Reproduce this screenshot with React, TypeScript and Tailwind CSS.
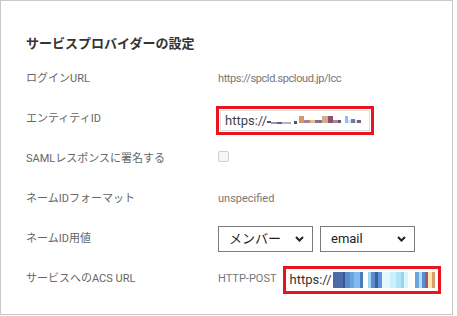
import React from 'react';

const font = "font-['Roboto','Noto_Sans_CJK_JP',sans-serif]";

// pixelated (blurred) parts of the URLs: [width, height, offsetY, colour]
const entityBlur: [number, number, number, string][] = [
  [4, 2, 1, '#4a5470'], [6, 2, 2, '#9a9ab8'], [5, 2, 2, '#5b6282'], [6, 2, 2, '#b3b4d0'],
  [3, 2, 2, '#c8aaa8'], [3, 0, 0, 'transparent'], [3, 3, 2, '#4b5272'], [2, 0, 0, 'transparent'],
  [5, 7, -1, '#cf9b6e'], [6, 3, 1, '#a88098'], [5, 3, 1, '#e6bc92'], [7, 3, 1, '#807192'],
  [6, 7, -1, '#d6ab8a'], [5, 7, -1, '#8c4f6e'], [5, 3, 1, '#b0849e'], [3, 3, 1, '#6a5072'],
  [4, 0, 0, 'transparent'], [3, 7, -1, '#8cc0f2'], [3, 3, 1, '#d6e4f4'], [4, 4, 0, '#6080ae'],
  [2, 3, 1, '#ffd8ae'], [4, 3, 1, '#716282'],
];

const acsBlur: [number, string][] = [
  [10, '#4d6aab'], [2, '#3b548f'], [5, '#5a8ccf'], [4, '#6ba5e0'], [6, '#7fbbec'], [3, '#4a7cc0'],
  [5, '#ffffff'], [3, '#a3d6f2'], [4, '#5a8ccf'], [3, '#3f5c9c'], [4, '#5f95d4'], [8, '#e6f8fd'],
  [6, '#c9f0fc'], [5, '#b2e4f8'], [3, '#9ad4f0'], [4, '#dbf5fc'], [7, '#ffffff'], [4, '#6aa6e0'],
  [3, '#b2e2f8'], [3, '#5b8fd0'], [3, '#9a5a70'], [4, '#fde6b2'], [3, '#d9a06e'],
];

const Chevron = () => (
  <svg width="9" height="6" viewBox="0 0 9 6" className="shrink-0">
    <path d="M1 1l3.5 3.5L8 1" fill="none" stroke="#222" strokeWidth="2" />
  </svg>
);

const Select = ({ label }: { label: string }) => (
  <div className="flex items-center justify-between w-[95px] h-[26px] border border-[#7a7a7a] pl-[10px] pr-[8px] text-[13px] text-[#222] bg-white">
    <span>{label}</span>
    <Chevron />
  </div>
);

const Row = ({ label, children }: { label: string; children: React.ReactNode }) => (
  <div className="flex items-center h-10">
    <div className="w-[192px] shrink-0 text-[11px] text-[#666]">{label}</div>
    <div className="flex items-center">{children}</div>
  </div>
);

export default function App() {
  return (
    <div className={`w-[453px] h-[315px] border border-[#c8c8c8] bg-white pl-[25px] ${font}`}>
      <div className="pt-[34px] text-[13px] leading-[18px] font-bold text-[#333]">
        サービスプロバイダーの設定
      </div>
      <div className="pt-[6px]">
        <Row label="ログインURL">
          <span className="text-[11px] tracking-[-0.4px] text-[#777]">https://spcld.spcloud.jp/lcc</span>
        </Row>
        <Row label="エンティティID">
          <div className="-ml-[2px] mt-[3px] border-[3px] border-[#e8141f] p-px">
            <div className="flex items-center w-[150px] h-[21px] border border-[#dcdcdc] pl-[4px] text-[13px] text-[#444]">
              <span>https://</span>
              <span className="flex items-center h-[12px]">
                {entityBlur.map(([w, h, y, c], i) => (
                  <span key={i} className="block" style={{ width: w, height: h, marginTop: y * 2, backgroundColor: c }} />
                ))}
              </span>
            </div>
          </div>
        </Row>
        <Row label="SAMLレスポンスに署名する">
          <span className="block w-[11px] h-[11px] rounded-[2px] border border-[#cfcfcf] bg-[#f6f6f6] -mt-[6px]" />
        </Row>
        <Row label="ネームIDフォーマット">
          <span className="text-[11px] text-[#777]">unspecified</span>
        </Row>
        <Row label="ネームID用値">
          <div className="flex gap-[7px]">
            <Select label="メンバー" />
            <Select label="email" />
          </div>
        </Row>
        <Row label="サービスへのACS URL">
          <span className="text-[11px] text-[#777]">HTTP-POST</span>
          <div className="ml-[6px] mt-[2px] border-[3px] border-[#e8141f]">
            <div className="flex items-center w-[152px] h-[22px] pl-[4px] text-[13px] text-[#333] bg-white">
              <span>https://</span>
              <span className="flex h-[16px] ml-[1px]">
                {acsBlur.map(([w, c], i) => (
                  <span key={i} className="block h-full" style={{ width: w, backgroundColor: c }} />
                ))}
              </span>
            </div>
          </div>
        </Row>
      </div>
    </div>
  );
}
